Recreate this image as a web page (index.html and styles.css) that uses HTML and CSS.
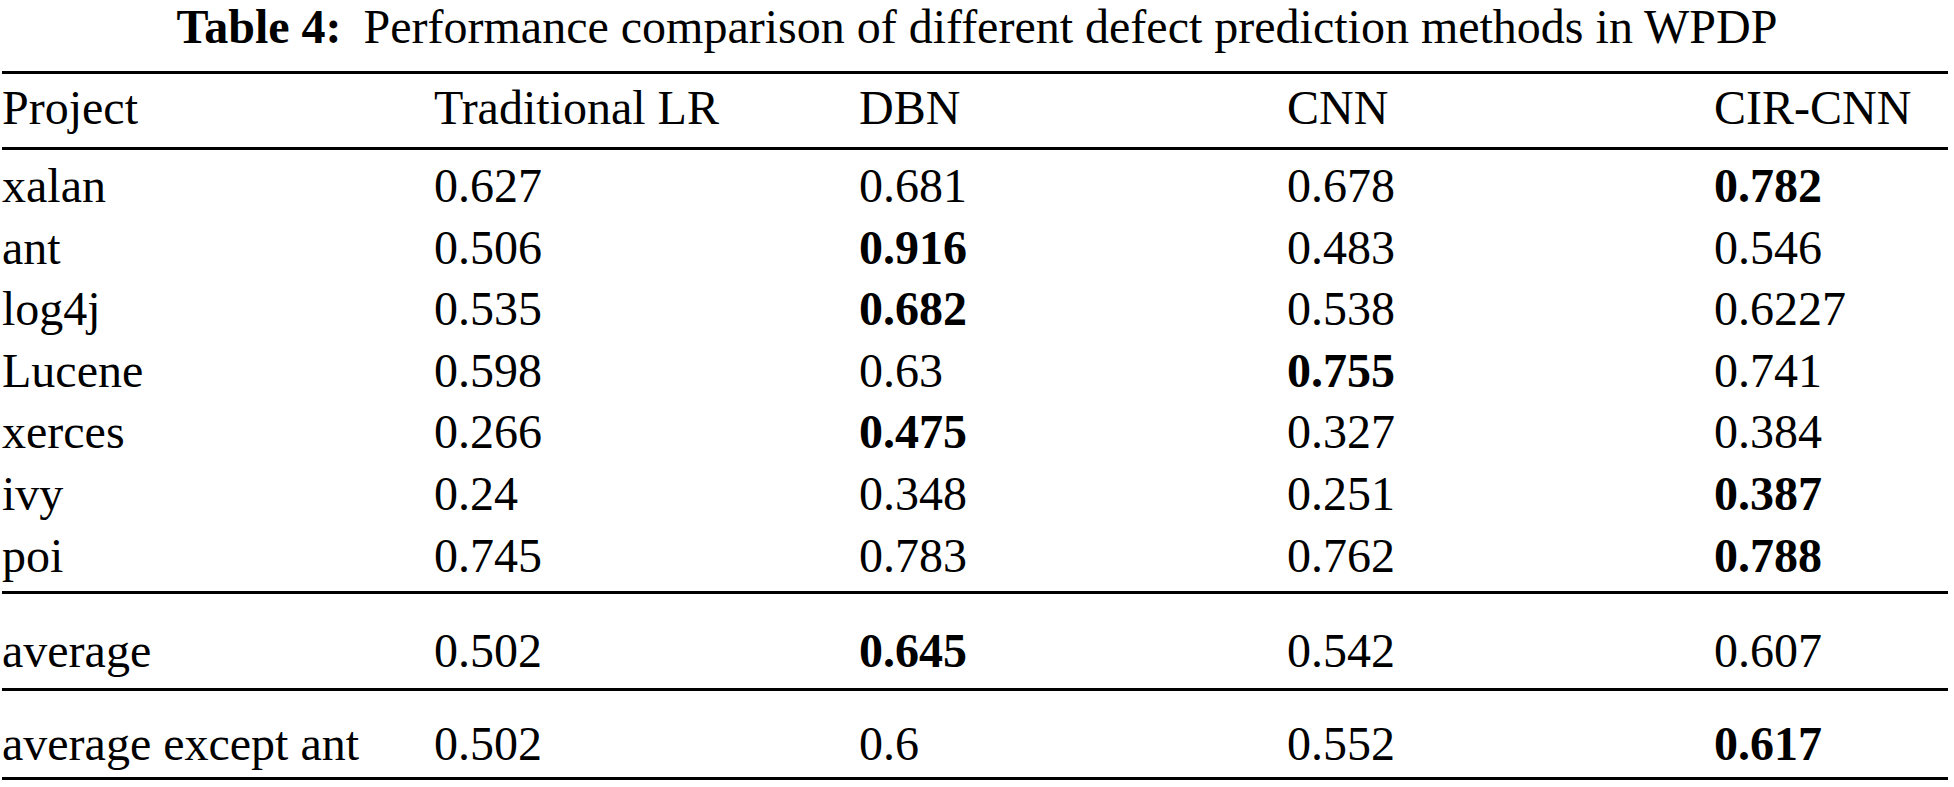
FILE: index.html
```html
<!DOCTYPE html>
<html lang="en">
<head>
<meta charset="utf-8">
<title>Table 4</title>
<link rel="stylesheet" href="styles.css">
</head>
<body>
<main class="page">
  <h1 class="caption"><b class="caption-label">Table 4:</b><span class="caption-text">Performance comparison of different defect prediction methods in WPDP</span></h1>
  <div class="table">
    <div class="row head">
      <div class="cell">Project</div>
      <div class="cell">Traditional LR</div>
      <div class="cell">DBN</div>
      <div class="cell">CNN</div>
      <div class="cell">CIR-CNN</div>
    </div>
    <div class="group body">
      <div class="row data">
        <div class="cell">xalan</div><div class="cell">0.627</div><div class="cell">0.681</div><div class="cell">0.678</div><div class="cell best">0.782</div>
      </div>
      <div class="row data">
        <div class="cell">ant</div><div class="cell">0.506</div><div class="cell best">0.916</div><div class="cell">0.483</div><div class="cell">0.546</div>
      </div>
      <div class="row data">
        <div class="cell">log4j</div><div class="cell">0.535</div><div class="cell best">0.682</div><div class="cell">0.538</div><div class="cell">0.6227</div>
      </div>
      <div class="row data">
        <div class="cell">Lucene</div><div class="cell">0.598</div><div class="cell">0.63</div><div class="cell best">0.755</div><div class="cell">0.741</div>
      </div>
      <div class="row data">
        <div class="cell">xerces</div><div class="cell">0.266</div><div class="cell best">0.475</div><div class="cell">0.327</div><div class="cell">0.384</div>
      </div>
      <div class="row data">
        <div class="cell">ivy</div><div class="cell">0.24</div><div class="cell">0.348</div><div class="cell">0.251</div><div class="cell best">0.387</div>
      </div>
      <div class="row data">
        <div class="cell">poi</div><div class="cell">0.745</div><div class="cell">0.783</div><div class="cell">0.762</div><div class="cell best">0.788</div>
      </div>
    </div>
    <div class="row summary avg">
      <div class="cell">average</div><div class="cell">0.502</div><div class="cell best">0.645</div><div class="cell">0.542</div><div class="cell">0.607</div>
    </div>
    <div class="row summary avg-except">
      <div class="cell">average except ant</div><div class="cell">0.502</div><div class="cell">0.6</div><div class="cell">0.552</div><div class="cell best">0.617</div>
    </div>
  </div>
</main>
</body>
</html>
```

FILE: styles.css
```css
html, body {
  margin: 0;
  padding: 0;
  background: #ffffff;
}

body {
  color: #000000;
  font-family: "Liberation Serif", "Times New Roman", serif;
  font-size: 48px;
}

.page {
  width: 1954px;
}

.caption {
  margin: 0;
  height: 53px;
  line-height: 53px;
  font-size: 48px;
  font-weight: normal;
  text-align: center;
  white-space: nowrap;
}

.caption-label {
  font-weight: bold;
}

.caption-text {
  margin-left: 22px;
}

.table {
  margin: 18px 6px 0 2px;
  border-top: 3px solid #000;
}

.row {
  display: grid;
  grid-template-columns: 432px 425px 428px 427px 1fr;
  line-height: 53px;
  white-space: nowrap;
}

.head {
  padding: 7px 0 13px;
  border-bottom: 3px solid #000;
}

.body {
  padding: 5px 0;
  border-bottom: 3px solid #000;
}

.data {
  line-height: 61.6px;
}

.avg {
  padding: 30px 0 11px;
  border-bottom: 3px solid #000;
}

.avg-except {
  padding: 26px 0 7px;
  border-bottom: 3px solid #000;
}

.best {
  font-weight: bold;
}
```
